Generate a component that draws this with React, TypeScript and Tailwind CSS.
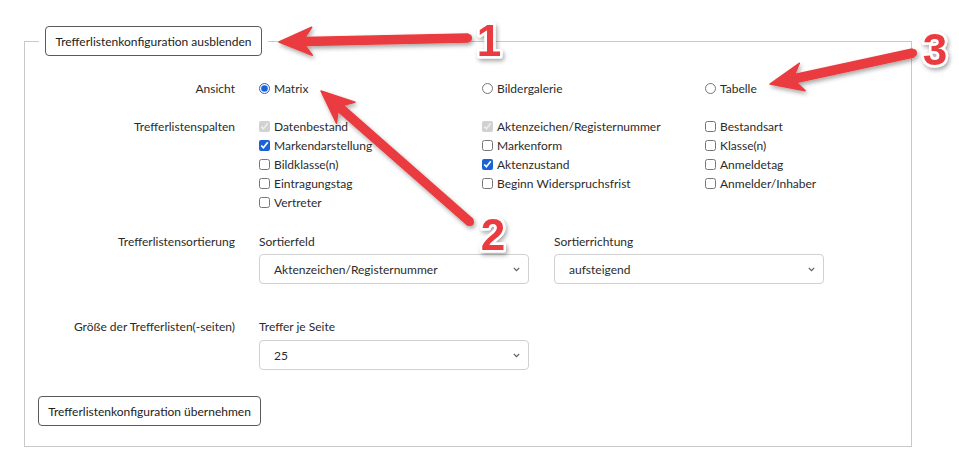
import React from "react";

const RED = "#ea3b3f";

function arrowPoints(tx: number, ty: number, hx: number, hy: number, shaft: number, headLen: number, headW: number) {
  const dx = hx - tx;
  const dy = hy - ty;
  const len = Math.sqrt(dx * dx + dy * dy);
  const ux = dx / len;
  const uy = dy / len;
  const px = -uy;
  const py = ux;
  const bx = hx - ux * headLen;
  const by = hy - uy * headLen;
  const s = shaft / 2;
  const w = headW / 2;
  const pts = [
    [tx + px * s, ty + py * s],
    [bx + ux * 4 + px * s, by + uy * 4 + py * s],
    [bx - ux * 3 + px * w, by - uy * 3 + py * w],
    [hx, hy],
    [bx - ux * 3 - px * w, by - uy * 3 - py * w],
    [bx + ux * 4 - px * s, by + uy * 4 - py * s],
    [tx - px * s, ty - py * s],
  ];
  return pts.map((p) => p[0].toFixed(1) + "," + p[1].toFixed(1)).join(" ");
}

function Arrow({ tx, ty, hx, hy }: { tx: number; ty: number; hx: number; hy: number }) {
  return (
    <g>
      <polygon points={arrowPoints(tx, ty, hx, hy, 8, 30, 28)} fill={RED} strokeLinejoin="round" stroke={RED} strokeWidth={1.5} />
      <circle cx={tx} cy={ty} r={4} fill={RED} />
    </g>
  );
}

function Num({ x, y, t }: { x: number; y: number; t: string }) {
  return (
    <text
      x={x}
      y={y}
      textAnchor="middle"
      fontFamily="'Liberation Sans', Arial, sans-serif"
      fontWeight={700}
      fontSize={44}
      fill={RED}
      stroke="#ffffff"
      strokeWidth={5}
      strokeLinejoin="round"
      paintOrder="stroke"
    >
      {t}
    </text>
  );
}

function Check({ label, checked, disabled }: { label: string; checked?: boolean; disabled?: boolean }) {
  return (
    <label className="flex items-center h-[19px] whitespace-nowrap">
      <input
        type="checkbox"
        defaultChecked={checked}
        disabled={disabled}
        className="w-[11px] h-[11px] m-0 mr-[4px] accent-[#1a62d6]"
      />
      <span>{label}</span>
    </label>
  );
}

function Radio({ label, checked }: { label: string; checked?: boolean }) {
  return (
    <label className="flex items-center h-[19px] whitespace-nowrap">
      <input type="radio" name="ansicht" defaultChecked={checked} className="w-[11px] h-[11px] m-0 mr-[4px] accent-[#1a62d6]" />
      <span>{label}</span>
    </label>
  );
}

function Select({ value }: { value: string }) {
  return (
    <div className="relative w-[270px] h-[30px] border border-[#d0d0d0] rounded-[4px] bg-white flex items-center pl-[14px]">
      <span>{value}</span>
      <svg className="absolute right-[8px] top-[12px]" width="7" height="5" viewBox="0 0 7 5">
        <path d="M0.8 0.8 L3.5 3.6 L6.2 0.8" fill="none" stroke="#555" strokeWidth="1.1" />
      </svg>
    </div>
  );
}

export default function App() {
  return (
    <div
      className="relative w-[959px] h-[455px] bg-white overflow-hidden text-[12px] leading-[19px] text-[#2b2b2b]"
      style={{ fontFamily: "Lato, 'Noto Sans', sans-serif" }}
    >
      <div className="pt-[26px] pl-[24px]">
        <fieldset className="w-[888px] min-w-0 border border-[#c9c9c9] pb-[20px]">
          <legend className="ml-[14px] px-[6px]">
            <button className="h-[30px] w-[217px] whitespace-nowrap border border-[#5a5a5a] rounded-[4px] bg-white text-[12px] text-[#222]">
              Trefferlistenkonfiguration ausblenden
            </button>
          </legend>

          <div className="flex mt-[23px]">
            <div className="w-[210px] text-right">Ansicht</div>
            <div className="ml-[24px] grid grid-cols-[223px_223px_auto]">
              <Radio label="Matrix" checked />
              <Radio label="Bildergalerie" />
              <Radio label="Tabelle" />
            </div>
          </div>

          <div className="flex mt-[19px]">
            <div className="w-[210px] text-right">Trefferlistenspalten</div>
            <div className="ml-[24px] grid grid-cols-[223px_223px_auto]">
              <div className="flex flex-col">
                <Check label="Datenbestand" checked disabled />
                <Check label="Markendarstellung" checked />
                <Check label="Bildklasse(n)" />
                <Check label="Eintragungstag" />
                <Check label="Vertreter" />
              </div>
              <div className="flex flex-col">
                <Check label="Aktenzeichen/Registernummer" checked disabled />
                <Check label="Markenform" />
                <Check label="Aktenzustand" checked />
                <Check label="Beginn Widerspruchsfrist" />
              </div>
              <div className="flex flex-col">
                <Check label="Bestandsart" />
                <Check label="Klasse(n)" />
                <Check label="Anmeldetag" />
                <Check label="Anmelder/Inhaber" />
              </div>
            </div>
          </div>

          <div className="flex mt-[20px]">
            <div className="w-[210px] text-right">Trefferlistensortierung</div>
            <div className="ml-[24px] flex gap-[25px]">
              <div>
                <div className="h-[19px]">Sortierfeld</div>
                <div className="mt-[3px]">
                  <Select value="Aktenzeichen/Registernummer" />
                </div>
              </div>
              <div>
                <div className="h-[19px]">Sortierrichtung</div>
                <div className="mt-[3px]">
                  <Select value="aufsteigend" />
                </div>
              </div>
            </div>
          </div>

          <div className="flex mt-[33px]">
            <div className="w-[210px] text-right">Größe der Trefferlisten(-seiten)</div>
            <div className="ml-[24px]">
              <div className="h-[19px]">Treffer je Seite</div>
              <div className="mt-[4px]">
                <Select value="25" />
              </div>
            </div>
          </div>

          <div className="mt-[26px] ml-[13px]">
            <button className="h-[30px] w-[223px] whitespace-nowrap border border-[#5a5a5a] rounded-[4px] bg-white text-[12px] text-[#222]">
              Trefferlistenkonfiguration übernehmen
            </button>
          </div>
        </fieldset>
      </div>

      <svg className="absolute left-0 top-0 pointer-events-none" width="959" height="455" viewBox="0 0 959 455">
        <defs>
          <filter id="sh" x="-20%" y="-20%" width="140%" height="140%">
            <feDropShadow dx="1.5" dy="2.5" stdDeviation="2" floodColor="#000" floodOpacity="0.35" />
          </filter>
        </defs>
        <g filter="url(#sh)">
          <Arrow tx={468} ty={38} hx={279} hy={42} />
          <Arrow tx={470} ty={222} hx={321} hy={91} />
          <Arrow tx={913} ty={53} hx={770} hy={84} />
          <Num x={489} y={56} t="1" />
          <Num x={493} y={250} t="2" />
          <Num x={935} y={65} t="3" />
        </g>
      </svg>
    </div>
  );
}
